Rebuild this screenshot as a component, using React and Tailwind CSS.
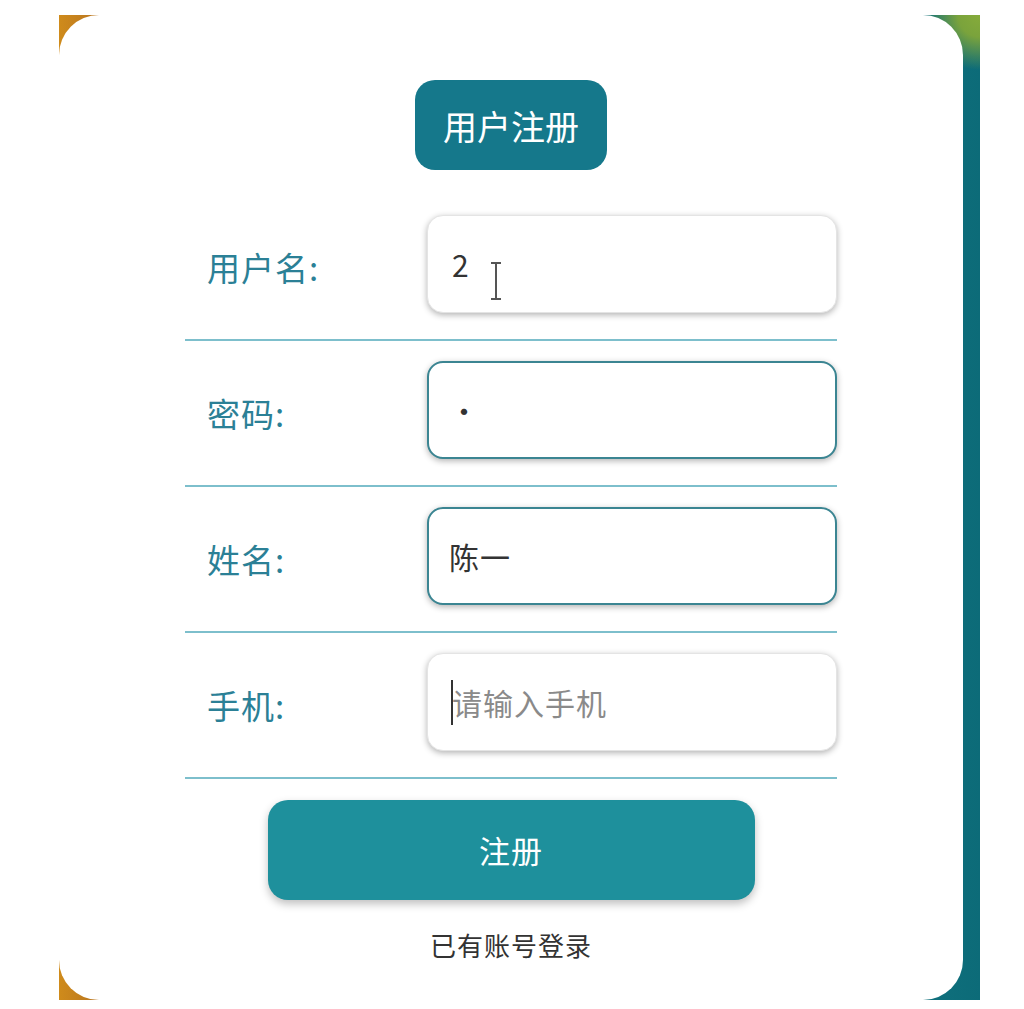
import React from "react";

const font = { fontFamily: '"Noto Sans CJK SC", "Noto Sans", sans-serif' };

const rows = [
  { label: "用户名:", value: "2", type: "text", focus: false, mouse: true },
  { label: "密码:", value: "1", type: "password", focus: true },
  { label: "姓名:", value: "陈一", type: "text", focus: true },
  { label: "手机:", value: "", placeholder: "请输入手机", type: "text", focus: false, caret: true },
];

const FormRow = ({ row }) => (
  <div className="flex items-center pt-[20px] pb-[26px] border-b-2 border-[#7dbfcc]">
    <label className="w-[242px] pl-[22px] pt-[6px] text-[33px] tracking-[1px] text-[#2b8096] leading-none">{row.label}</label>
    <div className="relative">
      <input
        type={row.type}
        defaultValue={row.value}
        placeholder={row.placeholder}
        readOnly
        className={
          row.focus
            ? "w-[410px] h-[98px] rounded-[16px] bg-white pl-[20px] pr-[24px] text-[30px] tracking-[1px] text-[#333] outline-none border-2 border-[#3b8592] shadow-[0_2px_6px_rgba(0,0,0,0.3)] placeholder:text-[#8a8a8a]"
            : "w-[410px] h-[98px] rounded-[16px] bg-white pl-[24px] pr-[24px] text-[30px] tracking-[1px] text-[#333] outline-none border border-[#e4e4e4] shadow-[0_2px_6px_rgba(0,0,0,0.3)] placeholder:text-[#8a8a8a]"
        }
        style={font}
      />
      {/* mouse I-beam over the first field */}
      {row.mouse && (
        <svg className="absolute left-[62px] top-[46px]" width="14" height="40" viewBox="0 0 14 40">
          <path d="M2 2h10M7 2v36M2 38h10" stroke="#555" strokeWidth="2" fill="none" />
        </svg>
      )}
      {/* text caret in the empty field */}
      {row.caret && <span className="absolute left-[24px] top-[27px] w-[2px] h-[45px] bg-[#333]" />}
    </div>
  </div>
);

export default function App() {
  return (
    <div className="w-[1024px] h-[1009px] bg-white pl-[59px] pt-[15px]" style={font}>
      <div className="w-[921px] h-[985px] bg-[radial-gradient(circle_at_100%_0%,#86ab3a_0px,#7aa33c_22px,rgba(15,111,124,0)_55px),linear-gradient(90deg,#cf8b1b_0%,#b06c22_6%,#2f7a6a_80%,#0f6f7c_95%,#0c6b78_100%)]">
        <div className="w-[904px] h-full rounded-[40px] bg-white flex flex-col items-center pt-[65px]">
          <div className="w-[192px] h-[90px] rounded-[20px] bg-[#15788b] flex items-center justify-center text-white text-[34px]">
            用户注册
          </div>
          <form className="w-[652px] mt-[25px]">
            {rows.map((row) => (
              <FormRow key={row.label} row={row} />
            ))}
          </form>
          <button className="mt-[21px] w-[487px] h-[100px] rounded-[20px] bg-[#1e909c] text-white text-[31px] tracking-[1px] shadow-[0_4px_8px_rgba(0,0,0,0.25)]">
            注册
          </button>
          <a className="mt-[25px] text-[26px] tracking-[1px] text-[#333]">已有账号登录</a>
        </div>
      </div>
    </div>
  );
}
